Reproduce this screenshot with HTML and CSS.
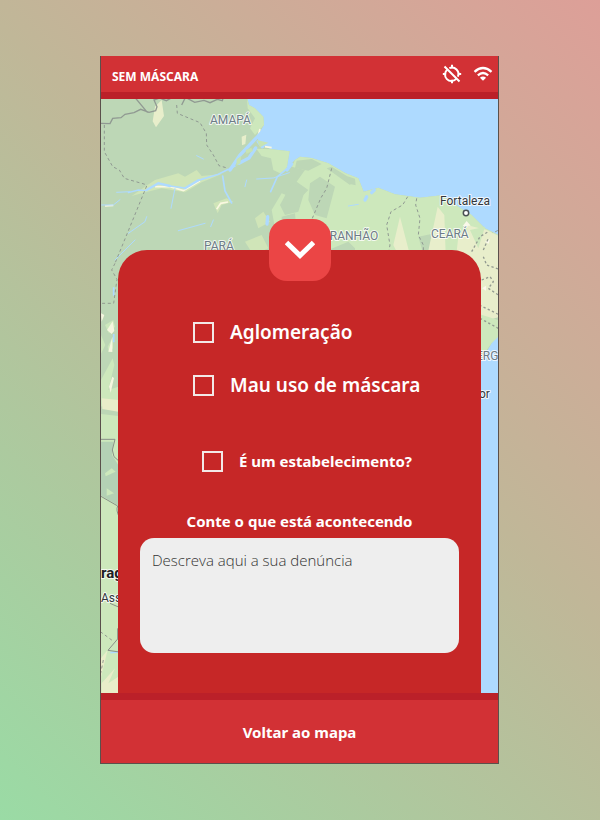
FILE: index.html
```html
<!DOCTYPE html>
<html lang="pt-BR">
<head>
<meta charset="utf-8">
<meta name="viewport" content="width=device-width, initial-scale=1">
<title>Sem Máscara</title>
<link rel="stylesheet" href="styles.css">
</head>
<body>
<main class="phone">
  <header class="topbar">
    <h1 class="brand">SEM MÁSCARA</h1>
    <div class="status">
      <svg class="icon" viewBox="0 0 24 24" role="img" aria-label="Localização desativada">
        <g fill="none" stroke="currentColor" stroke-width="2.4">
          <path d="M8.8 5A7.7 7.7 0 0 1 19 15.2M17.4 17.4A7.7 7.7 0 1 1 6.6 6.6"/>
          <path d="M12 1v4M12 19v4M1 12h4M19 12h4M3 3l18 18"/>
        </g>
      </svg>
      <svg class="icon" viewBox="0 0 24 24" role="img" aria-label="Wi-Fi">
        <g fill="none" stroke="currentColor" stroke-width="2.8">
          <path d="M1.8 9.4Q12 .4 22.2 9.4M5.8 13.6Q12 8.2 18.2 13.6"/>
        </g>
        <path d="M12 20.2l-3.7-3.8q3.7-3 7.4 0z" fill="currentColor"/>
      </svg>
    </div>
  </header>

  <section class="stage">
    <svg class="map" viewBox="101 99 397 594" preserveAspectRatio="xMidYMin slice" aria-hidden="true">
      <rect x="0" y="0" width="700" height="900" fill="#aedaff"/>
      <!-- northern coast -->
      <g transform="translate(95 50) scale(.33333)">
        <path fill="#bdd7b6" d="M0 140H456L462 165 480 175 505 200 507 225 485 260 497 285 530 298 584 304 575 355 600 330 615 320 650 324 700 340 752 370 790 385 806 425 850 413 900 433 975 443 1040 436 1090 470 1130 495 1170 535 1215 557V1050L1160 1060V1950H0Z"/>
        <path fill="#cde8bc" d="M456 146L462 165 480 175 505 200 507 225 480 255 465 235 480 205 458 175ZM484 296L530 298 584 304 575 355 560 372 535 360 528 325 500 318ZM600 330L615 320 650 324 700 340 752 370 790 385 806 425 850 413 900 433 975 443 1040 436 1090 470 1130 495 1170 535 1215 557V640H525L545 560 530 480 560 430 610 450 640 420 605 395 630 360 590 350Z"/>
        <path fill="#bdd7b6" d="M605 332l45-5 30 15-40 20-40-8zM645 400l30-20 45 30-25 95-35-10-20-45zM710 350l65 40-10 15-70-50zM755 378l25 8 2 20-18-4zM700 600l60-25 20 20v45h-80zM590 400l40 20-20 65-40 10-15-30zM560 500l40-10 5 60-45 10zM970 560l50-10 15 50-45 30z"/>
        <path fill="#e8eecb" d="M180 170l20-20 7 48-24 34-10-18zM915 500l-20 85 25 50h30zM1028 470l20 25 5 145-60-5zM1090 560l40-30 85 30v90H1080zM440 260l14-6-3 28-10 4z"/>
        <path fill="#d0e5b8" d="M150 410l30-20 70-20 20 10 35-20 15 18 60-6-60 25-50 30-70-12-60 15-30 8zM355 460l40-15 20 10-35 10-12 25zM480 505l25-20 20 30-35 20zM450 575l50-20 20 40-45 20z"/>
        <path fill="none" stroke="#faf8e1" stroke-width="5" d="M180 410l45 0 40 12 50-30M365 478l12-18 22-4M30 468l25-2M510 290l20 3M490 255l5-18"/>
        <g fill="none" stroke="#aedaff" stroke-linecap="round">
          <path stroke-width="4" d="M100 428l30-8 25 2"/>
          <path stroke-width="7" d="M155 420l35-20 35 8M270 415l40-24"/>
          <path stroke-width="5" d="M225 408l45 6M310 391l60-18 50-25"/>
          <path stroke-width="3" d="M20 465l35 0 20-16M65 427l40-2M228 475l12-60M305 317l20 10M485 387l50-3 48-16M760 468l30-5M100 550l50-35 5-15M60 630l60-60M355 510l-8 20M250 542l80-22M450 410l5-20"/>
          <path stroke-width="5" d="M383 378l7 45 20 36M527 425l20-45 30-25"/>
          <path stroke-width="10" d="M405 360l30-45 62-65M432 340l30-16 20-30M490 275l12 15"/>
          <path stroke-width="10" d="M590 342l-14 18M838 420l-8 8M815 440l-5 10M518 500l-2 22"/>
        </g>
        <path fill="#c7e3b4" d="M425 328l14-10-3 22-12 8zM452 300l17-7 5 10-20 8zM486 270l34 8-25 14z"/>
        <g fill="none" stroke="#909992" stroke-width="4">
          <path d="M18 220l27 1 8-16 25-2 12-10 27-5 20-10 25 9 20-5 4-12-9-20 17-6 20 8 38-20 23 12 24 13 28-6 18 7 22-10 15 4 6-20M122 145l35 42M270 145l-10 20"/>
          <path stroke-width="3" stroke-dasharray="9 8" d="M28 225v80l25 45 20 10 15 25 62 18M245 165l2 25 68 28 19 32 1 35 20 30 17 32 28 8M155 408L60 640M710 355l-15 60-18 30-25 60M938 440l-15 25-35 20-13 40 10 60-10 50M965 445l-3 20 13 40-5 50 15 30v50M1140 625l22-45 30-30 23-12M1150 620l60-30"/>
        </g>
      </g>
      <!-- western edge -->
      <g transform="translate(95 250) scale(.33333)">
        <path fill="#cde8bc" d="M0 490l90 10V1350H0Z"/>
        <path fill="#b4d1b5" d="M15 575h40l-4 40 25 40v115l-60-35z"/>
        <path fill="#cde8bc" d="M16 250l15 35-15 30zM30 225l25-15 5 20-18 20zM18 390l35-65 5 20-18 75 30-10v50l-55 10zM38 290l16-30v35l-12 12zM30 670l20-15 12 10-30 14zM35 715l22 15-22 7z"/>
        <path fill="#e9edc9" d="M20 445l50 5v35l-48-8zM20 1300l40-45-20 45 30-20v55H20zM18 1225l20-25-20 80z"/>
        <path fill="#f5f6df" d="M18 190l10 5-8 20zM36 240l17-26 5 28-8 10zM40 305l12-45v46zM42 410l10-30 5 4-10 44z"/>
        <path fill="none" stroke="#aedaff" stroke-width="5" d="M56 112v25M56 252v25M46 1208l28-3"/>
        <path fill="none" stroke="#899188" stroke-width="3" d="M16 568h44l-8 32 5 20 20 18M16 738l52 30q-6 12 5 34M45 1060l28 12M68 1135v32l-29 34 34 5"/>
        <path fill="none" stroke="#939b91" stroke-width="3" stroke-dasharray="9 8" d="M60 40L50 60l16 28-10 72H16M16 1145l38 28M25 1230l-8 40"/>
      </g>
      <!-- eastern edge -->
      <g transform="translate(440 180) scale(.33333)">
        <path fill="#e8eecb" d="M80 135l60 15 40 20v240l-65 20z"/>
        <path fill="#cde8bc" d="M90 150l45-10-20 65zM110 400l65 20v55l-20 15-15 20-25 10z"/>
        <path fill="#aedaff" d="M175 470l-20 20-12 20-23 30v1000h70z"/>
        <path fill="#faf8e9" d="M68 138l12-15 12 14zM126 325l12-8v15zM135 185l15-8-4 14z"/>
        <path fill="none" stroke="#939b91" stroke-width="4" stroke-dasharray="7 7" d="M95 215l25-45 25-15M130 210l15-35M130 230l10 25 35 12M125 300l25-10 10 15-15 20 30 20M118 375l57 28M120 415l55 30"/>
      </g>
      <g class="map-region">
        <text x="210" y="124">AMAPÁ</text>
        <text x="204" y="250">PARÁ</text>
        <text x="322" y="240">ARANHÃO</text>
        <text x="431" y="238">CEARÁ</text>
        <text x="476" y="360">ERG</text>
      </g>
      <g class="map-city">
        <text x="440" y="205">Fortaleza</text>
        <text x="479" y="398">or</text>
        <text x="101" y="602">Ass</text>
      </g>
      <text class="map-country" x="101" y="578">rag</text>
      <circle cx="466" cy="213" r="2.7" fill="#fff" stroke="#4a5054" stroke-width="1.5"/>
    </svg>

    <form class="sheet">
      <button class="toggle" type="button" aria-label="Recolher formulário">
        <svg class="chevron" viewBox="0 0 30 20" aria-hidden="true">
          <path d="M1.5 2.5L15 15.5 28.5 2.5" fill="none" stroke="currentColor" stroke-width="5"/>
        </svg>
      </button>
      <div class="options">
        <label class="option"><input class="box" type="checkbox" name="aglomeracao">Aglomeração</label>
        <label class="option"><input class="box" type="checkbox" name="mascara">Mau uso de máscara</label>
      </div>
      <label class="option option-place"><input class="box" type="checkbox" name="estabelecimento">É um estabelecimento?</label>
      <label class="caption" for="denuncia">Conte o que está acontecendo</label>
      <textarea class="story" id="denuncia" placeholder="Descreva aqui a sua denúncia"></textarea>
    </form>
  </section>

  <button class="back" type="button">Voltar ao mapa</button>
</main>
</body>
</html>
```
FILE: styles.css
```css
* {
  box-sizing: border-box;
}

body {
  min-height: 100vh;
  margin: 0;
  padding: 56px 101px 56px 100px;
  background: linear-gradient(45deg, #9adba5 0%, #c0b798 56%, #dd9f98 100%);
  color: #fff;
  font-family: "Noto Sans", "Open Sans", sans-serif;
}

.phone {
  display: flex;
  flex-direction: column;
  min-height: calc(100vh - 112px);
  border: solid #5b504b;
  border-width: 0 1px 1px;
}

.topbar {
  display: flex;
  justify-content: space-between;
  align-items: center;
  height: 43px;
  padding: 0 5px 0 11px;
  border-bottom: 7px solid #bb2029;
  background: #d23135;
}

.brand {
  margin: 0;
  padding-top: 6px;
  font-size: 12px;
  line-height: 20px;
  font-weight: 700;
}

.status {
  display: flex;
  gap: 11px;
}

.icon {
  display: block;
  width: 20px;
  height: 20px;
}

.stage {
  position: relative;
  display: flex;
  flex: 1;
  overflow: hidden;
  padding: 151px 17px 0;
}

.map {
  position: absolute;
  inset: 0;
  width: 100%;
  height: 100%;
}

.map text {
  font-family: Roboto, sans-serif;
  font-size: 12px;
  stroke: #fff;
  stroke-width: 2px;
  stroke-opacity: 0.8;
  stroke-linejoin: round;
  paint-order: stroke;
}

.map-region {
  fill: #6d7c87;
}

.map-city {
  fill: #33383c;
}

.map .map-country {
  fill: #202124;
  font-size: 15px;
  font-weight: 700;
}

.sheet {
  position: relative;
  display: flex;
  flex: 1;
  flex-direction: column;
  padding: 68px 22px 40px;
  border-radius: 29px 29px 0 0;
  background: #c62727;
}

.toggle {
  position: absolute;
  top: -31px;
  left: 50%;
  display: grid;
  place-items: center;
  width: 62px;
  height: 62px;
  margin-left: -31px;
  padding: 0;
  border: 0;
  border-radius: 18px;
  background: #eb4545;
  color: #fff;
}

.chevron {
  width: 30px;
  height: 20px;
}

.options {
  display: grid;
  gap: 25px;
  padding-left: 53px;
}

.option {
  display: flex;
  align-items: center;
  gap: 16px;
  font-size: 19px;
  line-height: 28px;
  font-weight: 600;
  white-space: nowrap;
}

.option-place {
  margin: 48px 0 32px;
  padding-left: 62px;
  font-size: 15px;
  font-weight: 700;
}

.box {
  flex: none;
  width: 21px;
  height: 21px;
  margin: 0;
  border: 2px solid #f3e9e7;
  appearance: none;
}

.box:checked {
  background: #f3e9e7;
  box-shadow: inset 0 0 0 3px #c62727;
}

.caption {
  margin-bottom: 3px;
  font-size: 15px;
  line-height: 28px;
  font-weight: 700;
  text-align: center;
}

.story {
  display: block;
  flex: 1;
  width: 100%;
  min-height: 115px;
  padding: 12px;
  border: 0;
  border-radius: 14px;
  background: #eee;
  color: #333;
  font: 300 15px/20px "Open Sans", "Noto Sans", sans-serif;
  resize: none;
}

.story::placeholder {
  color: #333;
  opacity: 1;
}

.back {
  height: 70px;
  padding: 0;
  border: 0;
  border-top: 7px solid #bb2029;
  background: #d23135;
  color: #fff;
  font: inherit;
  font-size: 15px;
  font-weight: 700;
}
```
